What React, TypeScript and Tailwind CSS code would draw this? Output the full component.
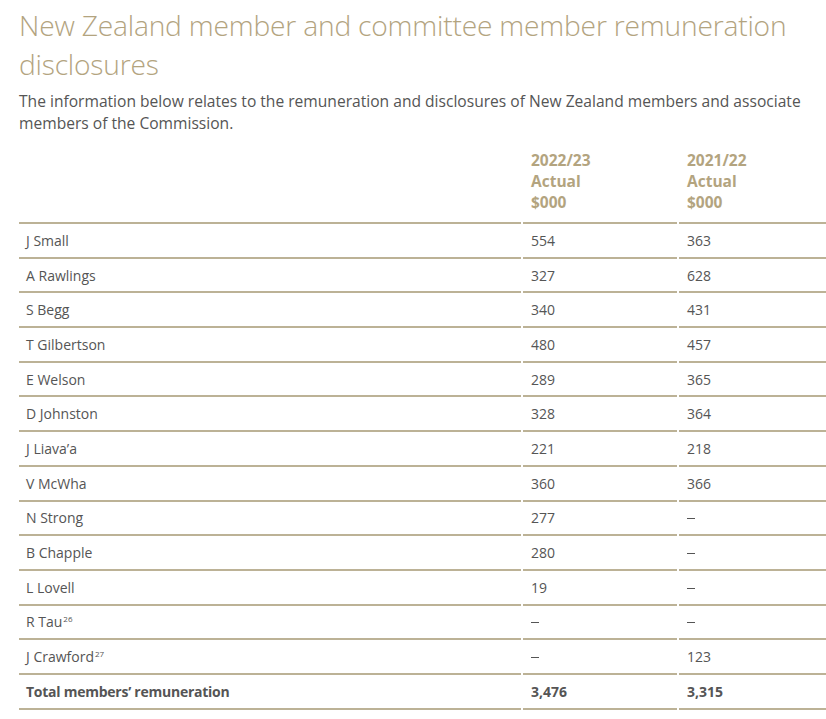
import React from "react";

type Row = { name: string; sup?: string; a: string; b: string };

const rows: Row[] = [
  { name: "J Small", a: "554", b: "363" },
  { name: "A Rawlings", a: "327", b: "628" },
  { name: "S Begg", a: "340", b: "431" },
  { name: "T Gilbertson", a: "480", b: "457" },
  { name: "E Welson", a: "289", b: "365" },
  { name: "D Johnston", a: "328", b: "364" },
  { name: "J Liava\u2019a", a: "221", b: "218" },
  { name: "V McWha", a: "360", b: "366" },
  { name: "N Strong", a: "277", b: "\u2013" },
  { name: "B Chapple", a: "280", b: "\u2013" },
  { name: "L Lovell", a: "19", b: "\u2013" },
  { name: "R Tau", sup: "26", a: "\u2013", b: "\u2013" },
  { name: "J Crawford", sup: "27", a: "\u2013", b: "123" },
];

const cell = "h-[34.7px] border-b-2 border-[#bcb296] flex items-center text-[14px] text-[#555555]";

function Val({ v }: { v: string }) {
  if (v === "\u2013") return <span className="block w-[8px] h-px bg-[#555555] translate-y-[1px]" />;
  return <>{v}</>;
}

export default function App() {
  return (
    <div className="w-[826px] h-[719px] overflow-hidden bg-white pl-[19px] font-['Open_Sans',sans-serif]">
      <h1 className="pt-[6px] text-[28.2px] leading-[39px] font-light text-[#b3a47f] tracking-[-0.2px]">
        New Zealand member and committee member remuneration disclosures
      </h1>
      <p className="mt-[6px] text-[15.6px] leading-[22px] text-[#555555] pr-[10px]">
        The information below relates to the remuneration and disclosures of New Zealand members and associate
        members of the Commission.
      </p>

      <div className="mt-[16px] grid grid-cols-[502px_154px_1fr] gap-x-[2px]">
        <div className="border-b-2 border-[#bcb296]" />
        {["2022/23", "2021/22"].map((y) => (
          <div key={y} className="border-b-2 border-[#bcb296] pl-[8px] pb-[9px] text-[15.5px] leading-[21px] font-bold text-[#b3a47f]">
            <div>{y}</div>
            <div>Actual</div>
            <div>$000</div>
          </div>
        ))}

        {rows.map((r) => (
          <React.Fragment key={r.name}>
            <div className={`${cell} pl-[7px]`}>
              <span>
                {r.name}
                {r.sup && <sup className="text-[8px] ml-[1px] -top-[5px]">{r.sup}</sup>}
              </span>
            </div>
            <div className={`${cell} pl-[8px]`}><Val v={r.a} /></div>
            <div className={`${cell} pl-[8px]`}><Val v={r.b} /></div>
          </React.Fragment>
        ))}

        <div className={`${cell} pl-[7px] font-bold text-[#3f3f3f] text-[13.2px] tracking-[-0.25px]`}>Total members’ remuneration</div>
        <div className={`${cell} pl-[8px] font-bold text-[#3f3f3f] text-[14px]`}>3,476</div>
        <div className={`${cell} pl-[8px] font-bold text-[#3f3f3f] text-[14px]`}>3,315</div>
      </div>
    </div>
  );
}
